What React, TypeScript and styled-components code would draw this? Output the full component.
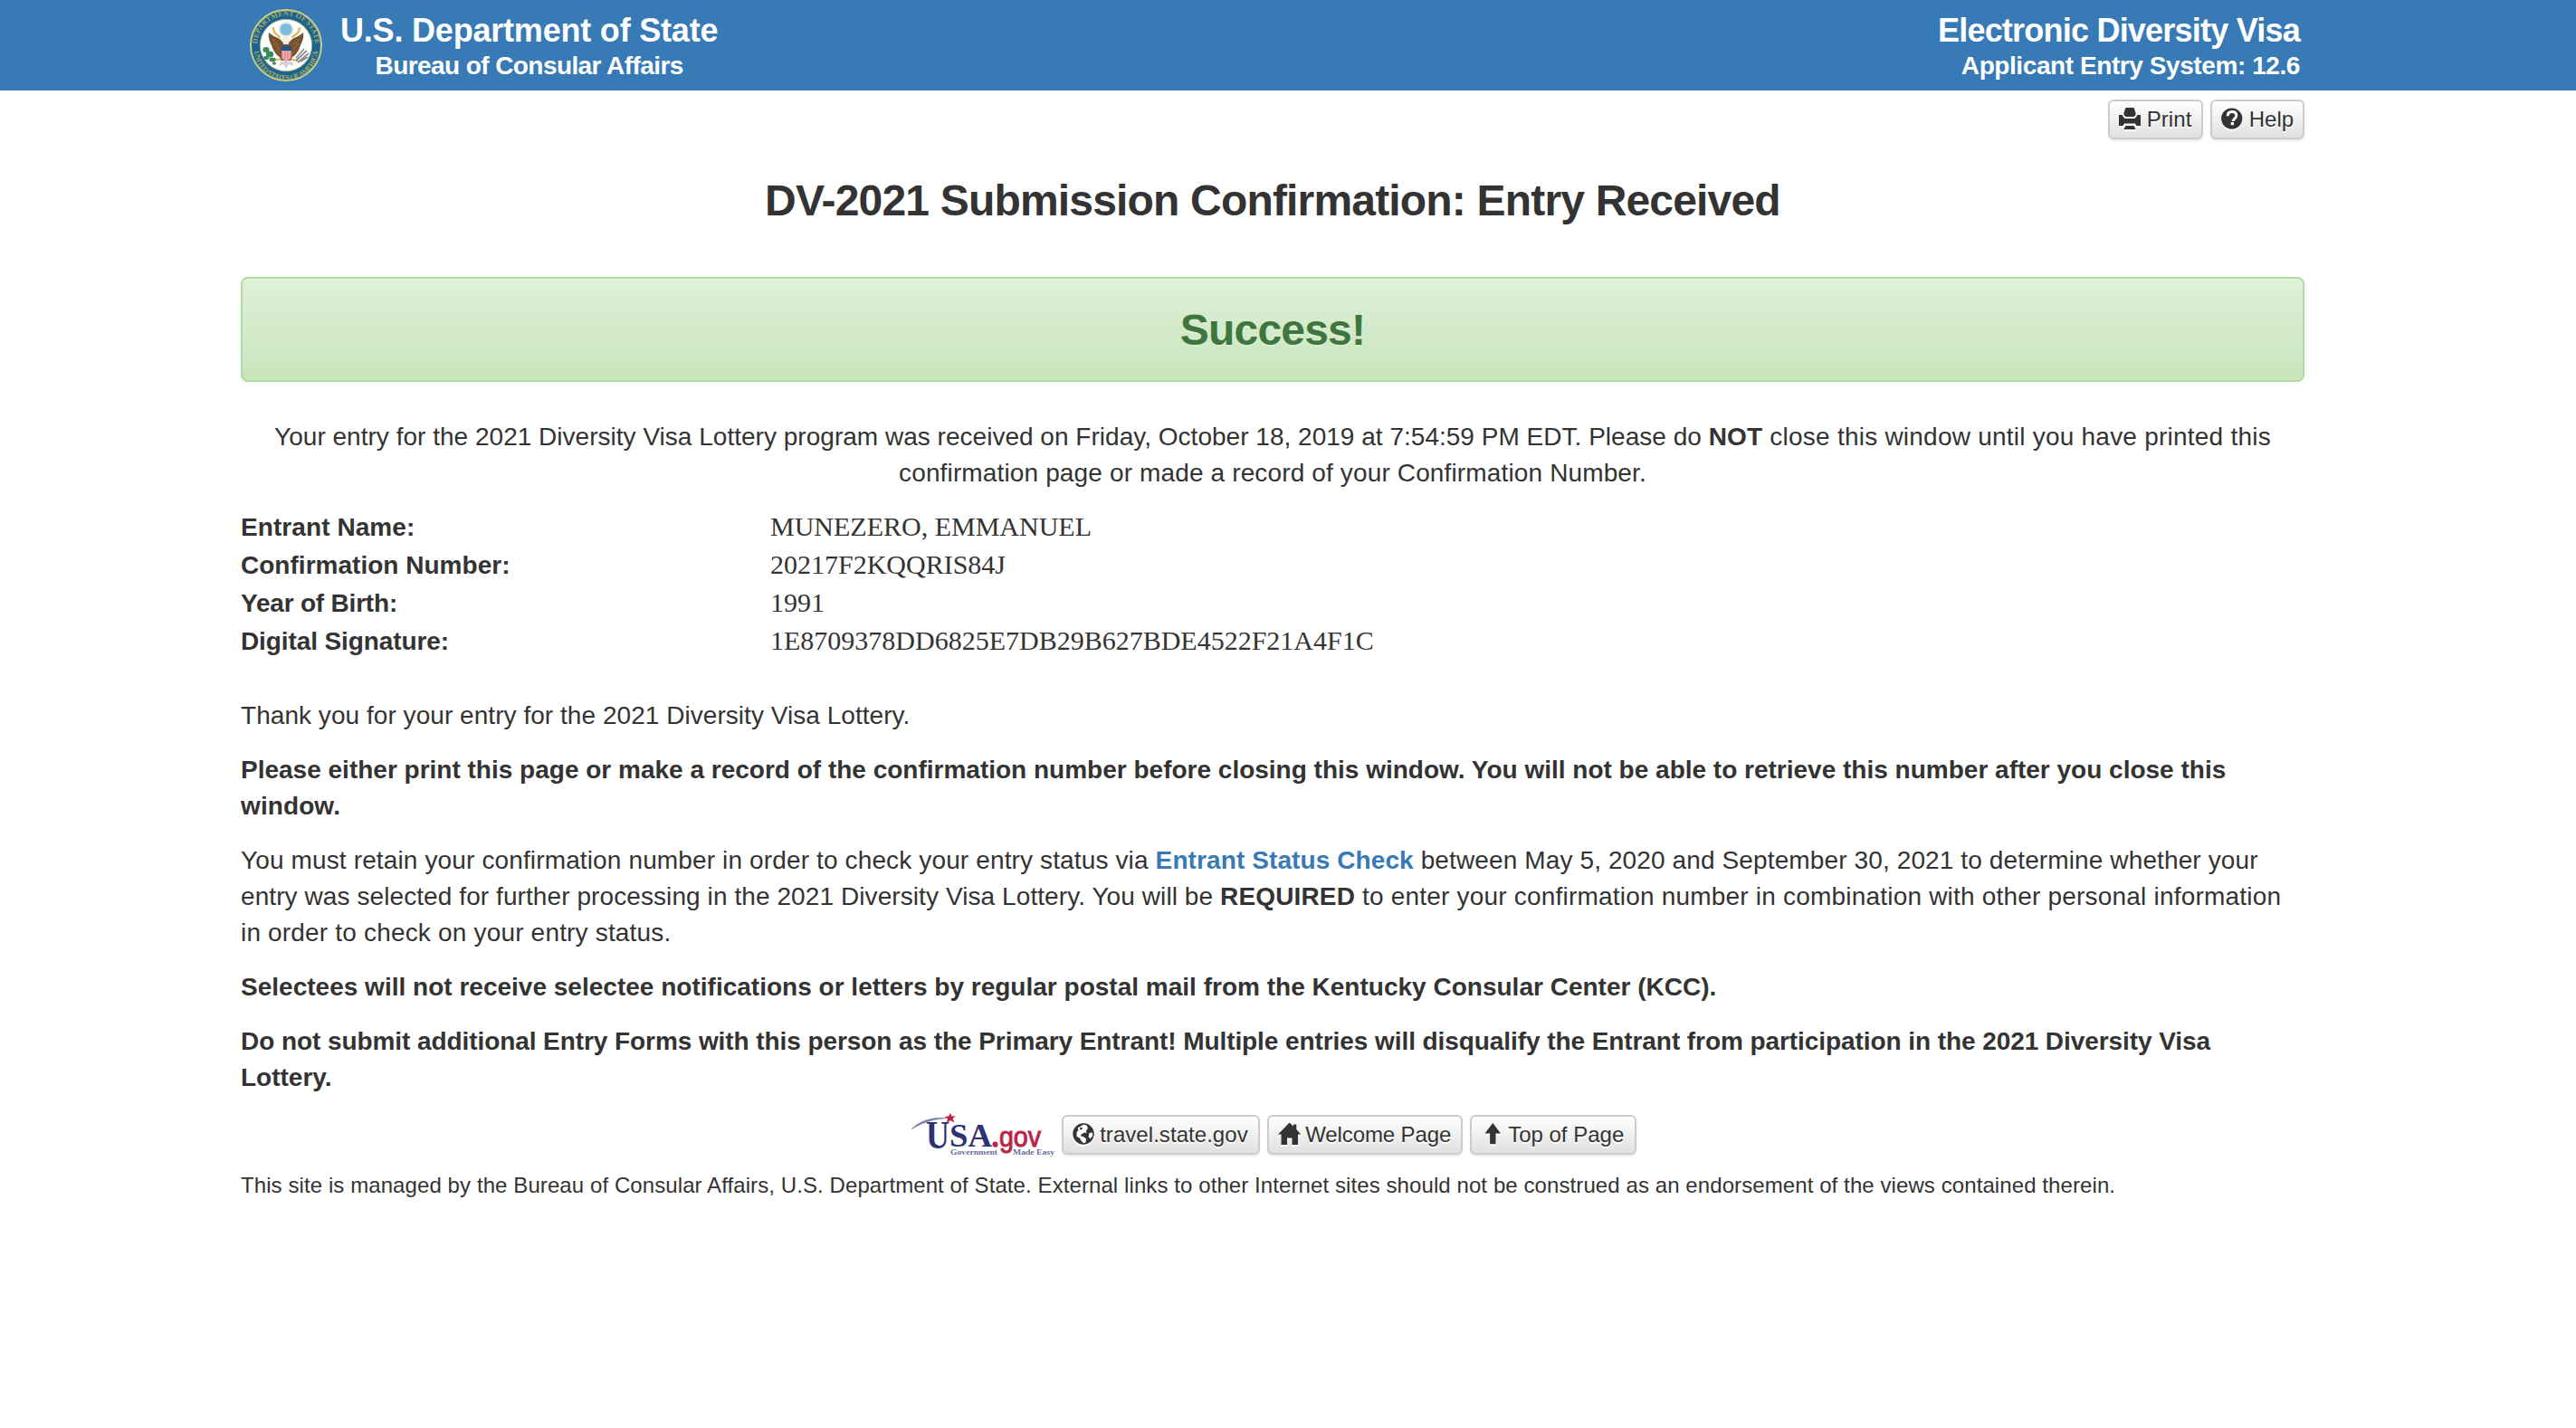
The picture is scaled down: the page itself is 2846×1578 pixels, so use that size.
import React from "react";
import styled, { createGlobalStyle } from "styled-components";

const Global = createGlobalStyle`
  html, body { margin: 0; padding: 0; background: #fff; }
  body {
    font-family: "Liberation Sans", Arial, sans-serif;
    font-size: 28px;
    line-height: 40px;
    color: #333;
  }
  *, *::before, *::after { box-sizing: border-box; }
`;

const Page = styled.div`
  display: flex;
  flex-direction: column;
  width: 2846px;
  min-height: 1578px;
`;

const Banner = styled.header`
  display: flex;
  height: 100px;
  padding: 0 305px 0 276px;
  align-items: flex-start;
  justify-content: space-between;
  background: #377ab5;
  color: #fff;
`;

const Brand = styled.div`
  display: flex;
  gap: 20px;
`;

const SealImage = styled.svg`
  width: 80px;
  height: 80px;
  margin-top: 10px;
`;

const BannerText = styled.div<{ $align: "center" | "right" }>`
  display: flex;
  flex-direction: column;
  padding-top: 14px;
  font-weight: 700;
  text-align: ${(p) => p.$align};
`;

const BannerTitle = styled.span<{ $spacing: number }>`
  font-size: 36px;
  line-height: 39px;
  letter-spacing: ${(p) => p.$spacing}px;
  white-space: nowrap;
`;

const BannerSubtitle = styled.span<{ $spacing: number }>`
  font-size: 28px;
  line-height: 39px;
  letter-spacing: ${(p) => p.$spacing}px;
  white-space: nowrap;
`;

const Container = styled.main`
  display: flex;
  flex-direction: column;
  width: 2280px;
  margin-left: 266px;
`;

const Toolbar = styled.div`
  display: flex;
  justify-content: flex-end;
  gap: 8px;
  padding-top: 10px;
`;

const Button = styled.a<{ $width: number }>`
  display: flex;
  align-items: center;
  width: ${(p) => p.$width}px;
  height: 44px;
  padding: 0 10px;
  gap: 6.67px;
  border: 2px solid #ccc;
  border-radius: 6px;
  background: linear-gradient(#fff, #e0e0e0);
  box-shadow: inset 0 2px 0 rgba(255, 255, 255, 0.15), 0 2px 2px rgba(0, 0, 0, 0.075);
  text-shadow: 0 2px 0 #fff;
  color: #333;
  font-size: 24px;
  line-height: 36px;
  white-space: nowrap;
`;

const ButtonLabel = styled.span<{ $spacing: number }>`
  letter-spacing: ${(p) => p.$spacing}px;
  margin-top: -1px;
`;

const Icon = styled.svg`
  flex: none;
  width: 24px;
  height: 24px;
  margin-top: -3px;
  overflow: visible;
  filter: drop-shadow(0 2px 0 #fff);
`;

const Title = styled.h1`
  margin: 41px 0 58px;
  font-size: 48px;
  font-weight: 700;
  line-height: 53px;
  letter-spacing: -0.82px;
  text-align: center;
`;

const Alert = styled.div`
  display: flex;
  align-items: center;
  justify-content: center;
  height: 116px;
  margin-bottom: 41px;
  border: 2px solid #b2dba1;
  border-radius: 8px;
  background: linear-gradient(#dff0d8, #c8e5bc);
  box-shadow: inset 0 2px 0 rgba(255, 255, 255, 0.25), 0 2px 4px rgba(0, 0, 0, 0.05);
`;

const AlertText = styled.strong`
  padding-top: 1px;
  color: #3e763f;
  font-size: 48px;
  line-height: 53px;
  letter-spacing: -0.8px;
  text-shadow: 0 2px 0 rgba(255, 255, 255, 0.2);
`;

const Paragraph = styled.p<{ $center?: boolean; $bold?: boolean }>`
  margin: 0 0 20px;
  font-weight: ${(p) => (p.$bold ? 700 : 400)};
  text-align: ${(p) => (p.$center ? "center" : "left")};
`;

const Line = styled.span`
  display: block;
  white-space: pre;
`;

const Run = styled.span<{ $spacing: number; $bold?: boolean }>`
  letter-spacing: ${(p) => p.$spacing}px;
  ${(p) => (p.$bold ? "font-weight: 700;" : "")}
`;

const StatusLink = styled.a`
  color: #377ab5;
  font-weight: 700;
  letter-spacing: 0.1px;
`;

const Details = styled.dl`
  display: grid;
  grid-template-columns: 585px 1fr;
  grid-auto-rows: 42px;
  align-items: baseline;
  margin: -1px 0 41px;
`;

const Term = styled.dt<{ $spacing: number }>`
  font-weight: 700;
  letter-spacing: ${(p) => p.$spacing}px;
`;

const Value = styled.dd`
  margin: 0;
  font-family: "Liberation Serif", "Times New Roman", serif;
  font-size: 30px;
`;

const FooterLinks = styled.div`
  display: flex;
  justify-content: center;
  gap: 8px;
  margin-top: 1px;
  height: 44px;
`;

const UsaLogo = styled.svg`
  flex: none;
  width: 160px;
  height: 50px;
  margin-top: -3px;
  overflow: visible;
`;

const FooterNote = styled.p`
  margin: 17px 0 0;
  font-size: 24px;
  line-height: 34px;
  letter-spacing: 0.088px;
  white-space: nowrap;
`;

const Seal = () => (
  <SealImage viewBox="0 0 80 80">
    <defs>
      <path id="sealTop" d="M10.5 52 A32 32 0 1 1 69.5 52" />
      <path id="sealBottom" d="M4.5 43 A35.5 35.5 0 0 0 75.5 43" />
    </defs>
    <circle cx="40" cy="40" r="39" fill="#1c6293" stroke="#c9cc86" strokeWidth="2" />
    <circle cx="40" cy="40" r="28.7" fill="#fff" stroke="#9fae78" strokeWidth="1" />
    <g fill="#a3ad5e" fontFamily="Liberation Serif, serif" fontSize="8" fontWeight="700">
      <text>
        <textPath href="#sealTop" startOffset="50%" textAnchor="middle" textLength="98">DEPARTMENT OF STATE</textPath>
      </text>
      <text>
        <textPath href="#sealBottom" startOffset="50%" textAnchor="middle" textLength="104">UNITED STATES OF AMERICA</textPath>
      </text>
    </g>
    <circle cx="40" cy="22.5" r="8.5" fill="#e4e8ee" />
    <circle cx="40" cy="22.5" r="6.6" fill="#7fbbdc" />
    <g fill="none" stroke="#d9b94c" strokeWidth="2.2" strokeLinecap="round">
      <path d="M26 21 C26 27 30 28 33 31" />
      <path d="M55 21 C55 27 50 28 47 31" />
      <path d="M28 56 L38 55 M43 55 L52 57" />
    </g>
    <path
      d="M21 26 C24 29 29 31 33 33 L38 38 L42 38 L47 33 C51 31 56 29 59 26 C60 31 58 36 56 40 C54 46 51 51 47 53 L45 57 L35 57 L33 53 C29 51 26 46 24 40 C22 36 20 31 21 26 Z"
      fill="#77502f"
    />
    <path d="M25 33 L32 40 M26 38 L33 45 M55 33 L48 40 M54 38 L47 45 M29 45 L34 50 M51 45 L46 50" stroke="#a0794f" strokeWidth="0.9" />
    <path d="M36 33 C36 29 42 28 43 31 L45 33 L43 35 L43 39 L37 39 Z" fill="#f1eee6" />
    <path d="M35 41 H46 V46 H35 Z" fill="#1f5788" />
    <path d="M35 46 H46 V53 C45 56 42 57 40.500 58 C38 57 35.500 56 35 53 Z" fill="#e48d97" />
    <path d="M37.500 46 V55 M40.500 46 V57 M43.500 46 V55" stroke="#f4c4c8" strokeWidth="0.8" />
    <g fill="#3d8a57">
      <ellipse cx="18" cy="45" rx="3.600" ry="3" />
      <ellipse cx="22" cy="50" rx="4.200" ry="3.400" />
      <ellipse cx="18" cy="54" rx="3" ry="2.200" />
      <ellipse cx="25" cy="56" rx="3.600" ry="2.400" />
      <ellipse cx="27" cy="60" rx="2" ry="1.800" />
    </g>
    <g stroke="#8a8a8c" strokeWidth="1.700">
      <path d="M51 57 L63 46 M53 59 L65 49 M51 54 L60 44 M56 58 L64 53" />
    </g>
    <path d="M34 58 L32 63 L37 61 L40 66 L43 61 L49 63 L46 58 Z" fill="#d4d4d6" />
  </SealImage>
);

const PrintIcon = () => (
  <Icon viewBox="0 0 24 24" fill="#333">
    <path d="M7.500 0 H16.500 L18.500 5.500 V8 L16.500 10 H7.500 L5.500 8 V5.500 Z" />
    <path d="M0 8 H4 V9 L6.500 12 H17.500 L20 9 V8 H24 V20 H19.500 L18 17.500 H6 L4.500 20 H0 Z" />
    <path d="M7.500 20 H16.500 L18.500 24 H5.500 Z" />
  </Icon>
);

const HelpIcon = () => (
  <Icon viewBox="0 0 24 24">
    <circle cx="11.700" cy="12" r="11.600" fill="#333" />
    <path d="M7.200 9.300 C7.200 6.400 9.100 4.600 12 4.600 C14.900 4.600 16.800 6.200 16.800 8.600 C16.800 12 13.200 12 13 15" fill="none" stroke="#fff" strokeWidth="3" />
    <path d="M10.700 16 H14 V19.200 H10.700 Z" fill="#fff" />
  </Icon>
);

const GlobeIcon = () => (
  <Icon viewBox="0 0 24 24">
    <circle cx="12" cy="12" r="11.700" fill="#333" />
    <path
      d="M9 3.500 L12 1.800 L15.500 2.600 L17 5.500 L15 8.500 L15.500 11 L13 10.500 L9.500 12.500 L9 14.500 L12 15 L15 17.500 L14.500 21.500 L12 22.300 L9 19 L8 16.500 L4.500 15 L4.500 10.500 L6.500 7.500 L5.500 5.500 Z"
      fill="#fff"
    />
    <path d="M18.500 11 L22 10.500 L22.200 14 L19.500 17.500 L17.500 15 Z" fill="#fff" />
    <path d="M8.500 4.500 L11 5.500 L10 7.500 L7.800 7 Z" fill="#333" />
  </Icon>
);

const HomeIcon = () => (
  <Icon viewBox="0 0 24 24" fill="#333">
    <path d="M12.700 -0.500 L17 3.800 V1.500 H20.300 V7.100 L25.200 12.500 H22 V24 H15.500 V16.500 H10 V24 H3.500 V12.500 H0 Z" />
  </Icon>
);

const ArrowIcon = () => (
  <Icon viewBox="0 0 24 24" fill="#333">
    <path d="M13.300 0 L22 11.500 H16.500 V22 Q16.500 23.200 15.300 23.200 H11.300 Q10.100 23.200 10.100 22 V11.500 H4.500 Z" />
  </Icon>
);

const Logo = () => (
  <UsaLogo viewBox="0 0 160 50">
    <path d="M2 19 C10 10 24 5.500 40 6.500 C25 8 13 11.500 2 19 Z" fill="#6c72a3" stroke="#8a8fb6" strokeWidth="0.8" />
    <g fill="#2e3172" fontFamily="Liberation Serif, serif" fontWeight="700">
      <text x="18" y="40" fontSize="44" textLength="26" lengthAdjust="spacingAndGlyphs">U</text>
      <text x="44" y="38" fontSize="35" textLength="47" lengthAdjust="spacingAndGlyphs">SA</text>
    </g>
    <path d="M45 1 L46.500 4.500 L51 4.500 L47.500 7 L49.500 11.500 L45 9 L40.500 12 L42 7.500 L38.500 5 L43 4.500 Z" fill="#c01f45" />
    <circle cx="94.500" cy="35.500" r="3" fill="#c01f45" />
    <text x="91" y="38" fontSize="31" textLength="54" lengthAdjust="spacingAndGlyphs" fill="#b92549" fontFamily="Liberation Sans, sans-serif" stroke="#b92549" strokeWidth="1">.gov</text>
    <g fill="#6a6da0" fontFamily="Liberation Serif, serif" fontSize="9" fontWeight="700">
      <text x="45" y="46.500" textLength="52" lengthAdjust="spacingAndGlyphs">Government</text>
      <text x="114" y="46.500" textLength="46" lengthAdjust="spacingAndGlyphs">Made Easy</text>
    </g>
  </UsaLogo>
);

const details = [
  { term: "Entrant Name:", value: "MUNEZERO, EMMANUEL", spacing: 0.08 },
  { term: "Confirmation Number:", value: "20217F2KQQRIS84J", spacing: 0.02 },
  { term: "Year of Birth:", value: "1991", spacing: -0.2 },
  { term: "Digital Signature:", value: "1E8709378DD6825E7DB29B627BDE4522F21A4F1C", spacing: -0.1 },
];

export default function App() {
  return (
    <Page>
      <Global />
      <Banner>
        <Brand>
          <Seal />
          <BannerText $align="center">
            <BannerTitle $spacing={-0.2}>U.S. Department of State</BannerTitle>
            <BannerSubtitle $spacing={-0.58}>Bureau of Consular Affairs</BannerSubtitle>
          </BannerText>
        </Brand>
        <BannerText $align="right">
          <BannerTitle $spacing={-0.78}>Electronic Diversity Visa</BannerTitle>
          <BannerSubtitle $spacing={-0.42}>Applicant Entry System: 12.6</BannerSubtitle>
        </BannerText>
      </Banner>
      <Container>
        <Toolbar>
          <Button $width={105}>
            <PrintIcon />
            <ButtonLabel $spacing={0.1}>Print</ButtonLabel>
          </Button>
          <Button $width={104}>
            <HelpIcon />
            <ButtonLabel $spacing={0.05}>Help</ButtonLabel>
          </Button>
        </Toolbar>
        <Title>DV-2021 Submission Confirmation: Entry Received</Title>
        <Alert>
          <AlertText>Success!</AlertText>
        </Alert>
        <Paragraph $center>
          <Line>
            <Run $spacing={0.018}>Your entry for the 2021 Diversity Visa Lottery program was received on Friday, October 18, 2019 at 7:54:59 PM EDT. Please do </Run>
            <Run $spacing={0.2} $bold>NOT</Run>
            <Run $spacing={0.23}> close this window until you have printed this</Run>
          </Line>
          <Line>
            <Run $spacing={0.14}>confirmation page or made a record of your Confirmation Number.</Run>
          </Line>
        </Paragraph>
        <Details>
          {details.map((d) => (
            <React.Fragment key={d.term}>
              <Term $spacing={d.spacing}>{d.term}</Term>
              <Value>{d.value}</Value>
            </React.Fragment>
          ))}
        </Details>
        <Paragraph>
          <Run $spacing={0.045}>Thank you for your entry for the 2021 Diversity Visa Lottery.</Run>
        </Paragraph>
        <Paragraph $bold>
          <Line>
            <Run $spacing={0}>Please either print this page or make a record of the confirmation number before closing this window. You will not be able to retrieve this number after you close this</Run>
          </Line>
          <Line>
            <Run $spacing={0.1}>window.</Run>
          </Line>
        </Paragraph>
        <Paragraph>
          <Line>
            <Run $spacing={0.135}>You must retain your confirmation number in order to check your entry status via </Run>
            <StatusLink>Entrant Status Check</StatusLink>
            <Run $spacing={0.12}> between May 5, 2020 and September 30, 2021 to determine whether your</Run>
          </Line>
          <Line>
            <Run $spacing={0.085}>entry was selected for further processing in the 2021 Diversity Visa Lottery. You will be </Run>
            <Run $spacing={0.15} $bold>REQUIRED</Run>
            <Run $spacing={0.2}> to enter your confirmation number in combination with other personal information</Run>
          </Line>
          <Line>
            <Run $spacing={0.18}>in order to check on your entry status.</Run>
          </Line>
        </Paragraph>
        <Paragraph $bold>
          <Run $spacing={0.01}>Selectees will not receive selectee notifications or letters by regular postal mail from the Kentucky Consular Center (KCC).</Run>
        </Paragraph>
        <Paragraph $bold>
          <Line>
            <Run $spacing={-0.075}>Do not submit additional Entry Forms with this person as the Primary Entrant! Multiple entries will disqualify the Entrant from participation in the 2021 Diversity Visa</Run>
          </Line>
          <Line>
            <Run $spacing={0}>Lottery.</Run>
          </Line>
        </Paragraph>
        <FooterLinks>
          <Logo />
          <Button $width={219}>
            <GlobeIcon />
            <ButtonLabel $spacing={0.05}>travel.state.gov</ButtonLabel>
          </Button>
          <Button $width={216}>
            <HomeIcon />
            <ButtonLabel $spacing={-0.1}>Welcome Page</ButtonLabel>
          </Button>
          <Button $width={184}>
            <ArrowIcon />
            <ButtonLabel $spacing={0}>Top of Page</ButtonLabel>
          </Button>
        </FooterLinks>
        <FooterNote>
          This site is managed by the Bureau of Consular Affairs, U.S. Department of State. External links to other Internet sites should not be construed as an endorsement of the views contained therein.
        </FooterNote>
      </Container>
    </Page>
  );
}
